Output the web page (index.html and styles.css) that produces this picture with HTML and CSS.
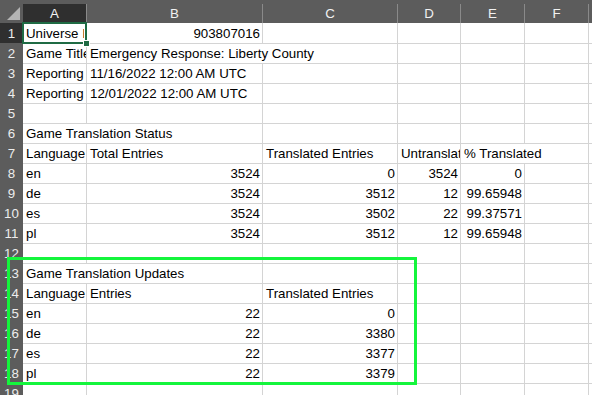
FILE: index.html
```html
<!DOCTYPE html>
<html lang="en">
<head>
  <meta charset="UTF-8">
  <meta name="viewport" content="width=device-width, initial-scale=1.0">
  <title>Translation report</title>
  <link rel="stylesheet" href="styles.css">
</head>
<body>
  <div class="sheet">
    <!-- column headers -->
    <div class="row head-row">
      <div class="corner"><span class="tri"></span></div>
      <div class="col-head active">A</div>
      <div class="col-head">B</div>
      <div class="col-head">C</div>
      <div class="col-head">D</div>
      <div class="col-head">E</div>
      <div class="col-head">F</div>
      <div class="col-head last"></div>
    </div>

    <div class="row">
      <div class="num active">1</div>
      <div class="cell selected"><span class="clip">Universe ID</span></div>
      <div class="cell right">903807016</div>
      <div class="cell"></div><div class="cell"></div><div class="cell"></div><div class="cell"></div><div class="cell end"></div>
    </div>
    <div class="row">
      <div class="num">2</div>
      <div class="cell">Game Title</div>
      <div class="cell span2">Emergency Response: Liberty County</div>
      <div class="cell"></div><div class="cell"></div><div class="cell"></div><div class="cell end"></div>
    </div>
    <div class="row">
      <div class="num">3</div>
      <div class="cell">Reporting Start</div>
      <div class="cell">11/16/2022 12:00 AM UTC</div>
      <div class="cell"></div><div class="cell"></div><div class="cell"></div><div class="cell"></div><div class="cell end"></div>
    </div>
    <div class="row">
      <div class="num">4</div>
      <div class="cell">Reporting End</div>
      <div class="cell">12/01/2022 12:00 AM UTC</div>
      <div class="cell"></div><div class="cell"></div><div class="cell"></div><div class="cell"></div><div class="cell end"></div>
    </div>
    <div class="row">
      <div class="num">5</div>
      <div class="cell"></div><div class="cell"></div><div class="cell"></div><div class="cell"></div><div class="cell"></div><div class="cell"></div><div class="cell end"></div>
    </div>
    <div class="row">
      <div class="num">6</div>
      <div class="cell span2">Game Translation Status</div>
      <div class="cell"></div><div class="cell"></div><div class="cell"></div><div class="cell"></div><div class="cell end"></div>
    </div>
    <div class="row">
      <div class="num">7</div>
      <div class="cell">Language</div>
      <div class="cell">Total Entries</div>
      <div class="cell">Translated Entries</div>
      <div class="cell">Untranslated Entries</div>
      <div class="cell span2">% Translated</div>
      <div class="cell end"></div>
    </div>
    <div class="row">
      <div class="num">8</div>
      <div class="cell">en</div>
      <div class="cell right">3524</div>
      <div class="cell right">0</div>
      <div class="cell right">3524</div>
      <div class="cell right">0</div>
      <div class="cell"></div><div class="cell end"></div>
    </div>
    <div class="row">
      <div class="num">9</div>
      <div class="cell">de</div>
      <div class="cell right">3524</div>
      <div class="cell right">3512</div>
      <div class="cell right">12</div>
      <div class="cell right">99.65948</div>
      <div class="cell"></div><div class="cell end"></div>
    </div>
    <div class="row">
      <div class="num">10</div>
      <div class="cell">es</div>
      <div class="cell right">3524</div>
      <div class="cell right">3502</div>
      <div class="cell right">22</div>
      <div class="cell right">99.37571</div>
      <div class="cell"></div><div class="cell end"></div>
    </div>
    <div class="row">
      <div class="num">11</div>
      <div class="cell">pl</div>
      <div class="cell right">3524</div>
      <div class="cell right">3512</div>
      <div class="cell right">12</div>
      <div class="cell right">99.65948</div>
      <div class="cell"></div><div class="cell end"></div>
    </div>
    <div class="row">
      <div class="num">12</div>
      <div class="cell"></div><div class="cell"></div><div class="cell"></div><div class="cell"></div><div class="cell"></div><div class="cell"></div><div class="cell end"></div>
    </div>
    <div class="row">
      <div class="num">13</div>
      <div class="cell span2">Game Translation Updates</div>
      <div class="cell"></div><div class="cell"></div><div class="cell"></div><div class="cell"></div><div class="cell end"></div>
    </div>
    <div class="row">
      <div class="num">14</div>
      <div class="cell">Language</div>
      <div class="cell">Entries</div>
      <div class="cell">Translated Entries</div>
      <div class="cell"></div><div class="cell"></div><div class="cell"></div><div class="cell end"></div>
    </div>
    <div class="row">
      <div class="num">15</div>
      <div class="cell">en</div>
      <div class="cell right">22</div>
      <div class="cell right">0</div>
      <div class="cell"></div><div class="cell"></div><div class="cell"></div><div class="cell end"></div>
    </div>
    <div class="row">
      <div class="num">16</div>
      <div class="cell">de</div>
      <div class="cell right">22</div>
      <div class="cell right">3380</div>
      <div class="cell"></div><div class="cell"></div><div class="cell"></div><div class="cell end"></div>
    </div>
    <div class="row">
      <div class="num">17</div>
      <div class="cell">es</div>
      <div class="cell right">22</div>
      <div class="cell right">3377</div>
      <div class="cell"></div><div class="cell"></div><div class="cell"></div><div class="cell end"></div>
    </div>
    <div class="row">
      <div class="num">18</div>
      <div class="cell">pl</div>
      <div class="cell right">22</div>
      <div class="cell right">3379</div>
      <div class="cell"></div><div class="cell"></div><div class="cell"></div><div class="cell end"></div>
    </div>
    <div class="row">
      <div class="num">19</div>
      <div class="cell"></div><div class="cell"></div><div class="cell"></div><div class="cell"></div><div class="cell"></div><div class="cell"></div><div class="cell end"></div>
    </div>

    <!-- highlight drawn over the updates table -->
    <div class="mark"></div>
  </div>
</body>
</html>
```

FILE: styles.css
```css
body{
  margin: 0;
  background: #fff;
  overflow: hidden;
}
.sheet{
  position: relative;
  width: 592px;
  height: 395px;
  overflow: hidden;
  font-family: "Liberation Sans", Arial, sans-serif;
  font-size: 13.3px;
  color: #000;
}
.row{
  display: grid;
  grid-template-columns: 23px 64px 176px 135px 63px 64px 64px 1fr;
  height: 20px;
}
.head-row{
  height: 23px;
  background: #5c5c5c;
}
.corner{
  position: relative;
  background: #5c5c5c;
}
.tri{
  position: absolute;
  right: 3px;
  bottom: 3px;
  width: 0;
  height: 0;
  border-left: 13px solid transparent;
  border-bottom: 13px solid #b4b4b4;
}
.col-head{
  margin-top: 4px;
  border-right: 1px solid #8a8a8a;
  color: #f2f2f2;
  text-align: center;
  line-height: 19px;
}
.col-head.last{
  border-right: none;
}
.col-head.active{
  background: #2f2f2f;
}
.num{
  background: #5c5c5c;
  color: #ededed;
  text-align: center;
  padding-top: 2px;
  line-height: 18px;
  border-bottom: 1px solid #7a7a7a;
  box-sizing: border-box;
}
.num.active{
  background: #2f2f2f;
}
.cell{
  box-sizing: border-box;
  border-right: 1px solid #d4d4d4;
  border-bottom: 1px solid #d4d4d4;
  padding: 2px 2px 0 3px;
  line-height: 18px;
  white-space: nowrap;
  overflow: hidden;
}
.cell.end{
  border-right: none;
}
.right{
  text-align: right;
}
.span2{
  grid-column: span 2;
}
/* active cell A1 */
.selected{
  position: relative;
  overflow: visible;
  z-index: 2;
}
.clip{
  display: block;
  overflow: hidden;
}
.selected::before{
  content: "";
  position: absolute;
  left: -1px;
  top: -1px;
  right: -1px;
  bottom: -1px;
  border: 2px solid #1f6b44;
}
.selected::after{
  content: "";
  position: absolute;
  right: -4px;
  bottom: -4px;
  width: 5px;
  height: 5px;
  background: #1f6b44;
  border: 1px solid #fff;
}
.mark{
  position: absolute;
  left: 7px;
  top: 257px;
  width: 410px;
  height: 128px;
  box-sizing: border-box;
  border: 3px solid #14f53c;
  z-index: 3;
}
```
